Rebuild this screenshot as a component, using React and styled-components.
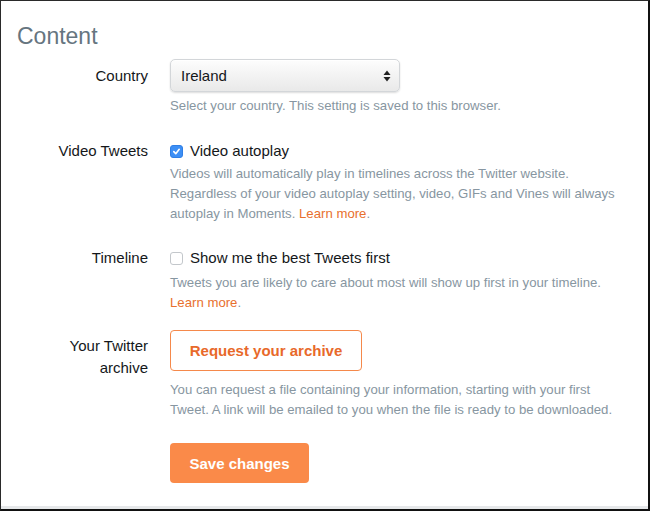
import styled, { createGlobalStyle } from "styled-components";

const GlobalStyle = createGlobalStyle`
  html, body {
    margin: 0;
    padding: 0;
    background: #ffffff;
  }
  body {
    font-family: "Liberation Sans", Arial, sans-serif;
  }
`;

const Frame = styled.div`
  box-sizing: border-box;
  width: 650px;
  height: 511px;
  border-top: 1px solid #2a2a2a;
  border-left: 1px solid #2a2a2a;
  border-right: 2px solid #111;
  border-bottom: 2px solid #111;
  box-shadow: inset 0 -3px 0 #e6e8ea;
  background: #fff;
  overflow: hidden;
`;

const Heading = styled.h2`
  margin: 21px 0 0 16px;
  font-size: 23px;
  line-height: 28px;
  font-weight: 400;
  color: #66757f;
`;

const Form = styled.div`
  display: flex;
  flex-direction: column;
`;

const Row = styled.div`
  display: grid;
  grid-template-columns: 100px 1fr;
  column-gap: 22px;
  padding-left: 47px;
  margin-top: ${(p) => p.$gap}px;
`;

const Label = styled.div`
  text-align: right;
  font-size: 15px;
  line-height: ${(p) => p.$lh || 20}px;
  color: #14171a;
  padding-top: ${(p) => p.$pt || 0}px;
`;

const Control = styled.div`
  display: flex;
  flex-direction: column;
  align-items: flex-start;
`;

const Help = styled.p`
  margin: ${(p) => p.$mt}px 0 0;
  max-width: 460px;
  font-size: 13.2px;
  line-height: 20px;
  color: #8796a1;
`;

const LearnMore = styled.a`
  color: #e8702e;
  text-decoration: none;
`;

const Select = styled.div`
  box-sizing: border-box;
  width: 230px;
  height: 33px;
  display: flex;
  align-items: center;
  justify-content: space-between;
  padding: 0 8px 0 10px;
  border-radius: 5px;
  border: 1px solid #d3d6d9;
  background: linear-gradient(#fdfdfd, #e9e9e9);
  box-shadow: 0 1px 2px rgba(0, 0, 0, 0.14), inset 0 1px 0 #fff;
  font-size: 15px;
  color: #14171a;
`;

const CheckLine = styled.label`
  display: flex;
  align-items: center;
  gap: 7px;
  font-size: 15px;
  line-height: 20px;
  color: #14171a;
`;

const Box = styled.span`
  box-sizing: border-box;
  width: 13px;
  height: 13px;
  border-radius: 3px;
  display: inline-flex;
  align-items: center;
  justify-content: center;
  background: ${(p) => (p.$checked ? "#3d8ff5" : "#fff")};
  border: 1px solid ${(p) => (p.$checked ? "#2f7fe6" : "#c3c7cb")};
`;

const OutlineButton = styled.button`
  box-sizing: border-box;
  width: 192px;
  height: 41px;
  border: 1px solid #f5894b;
  border-radius: 4px;
  background: #fff;
  color: #e8692a;
  font-family: inherit;
  font-size: 15px;
  font-weight: 700;
`;

const SaveButton = styled.button`
  box-sizing: border-box;
  width: 139px;
  height: 40px;
  border: none;
  border-radius: 4px;
  background: #fa8a49;
  color: #fff;
  font-family: inherit;
  font-size: 15px;
  font-weight: 700;
`;

function Checkbox({ checked }) {
  return (
    <Box $checked={checked}>
      {checked && (
        <svg width="9" height="9" viewBox="0 0 10 10">
          <path d="M2 5.2 L4.2 7.4 L8 2.6" fill="none" stroke="#fff" strokeWidth="1.8" strokeLinecap="round" strokeLinejoin="round" />
        </svg>
      )}
    </Box>
  );
}

function Arrows() {
  return (
    <svg width="8" height="12" viewBox="0 0 8 12">
      <path d="M4 0.5 L7.5 5 L0.5 5 Z" fill="#222" />
      <path d="M4 11.5 L7.5 7 L0.5 7 Z" fill="#222" />
    </svg>
  );
}

export default function App() {
  return (
    <>
      <GlobalStyle />
      <Frame>
        <Heading>Content</Heading>
        <Form>
          <Row $gap={9}>
            <Label $pt={7}>Country</Label>
            <Control>
              <Select>
                <span>Ireland</span>
                <Arrows />
              </Select>
              <Help $mt={4}>Select your country. This setting is saved to this browser.</Help>
            </Control>
          </Row>

          <Row $gap={25}>
            <Label>Video Tweets</Label>
            <Control>
              <CheckLine>
                <Checkbox checked />
                Video autoplay
              </CheckLine>
              <Help $mt={3}>
                Videos will automatically play in timelines across the Twitter website.
                Regardless of your video autoplay setting, video, GIFs and Vines will always
                autoplay in Moments. <LearnMore href="#">Learn more</LearnMore>.
              </Help>
            </Control>
          </Row>

          <Row $gap={24}>
            <Label>Timeline</Label>
            <Control>
              <CheckLine>
                <Checkbox />
                Show me the best Tweets first
              </CheckLine>
              <Help $mt={5}>
                Tweets you are likely to care about most will show up first in your timeline.{" "}
                <LearnMore href="#">Learn more</LearnMore>.
              </Help>
            </Control>
          </Row>

          <Row $gap={17}>
            <Label $lh={22} $pt={5}>Your Twitter archive</Label>
            <Control>
              <OutlineButton>Request your archive</OutlineButton>
              <Help $mt={9}>
                You can request a file containing your information, starting with your first
                Tweet. A link will be emailed to you when the file is ready to be downloaded.
              </Help>
            </Control>
          </Row>

          <Row $gap={23}>
            <span />
            <Control>
              <SaveButton>Save changes</SaveButton>
            </Control>
          </Row>
        </Form>
      </Frame>
    </>
  );
}
